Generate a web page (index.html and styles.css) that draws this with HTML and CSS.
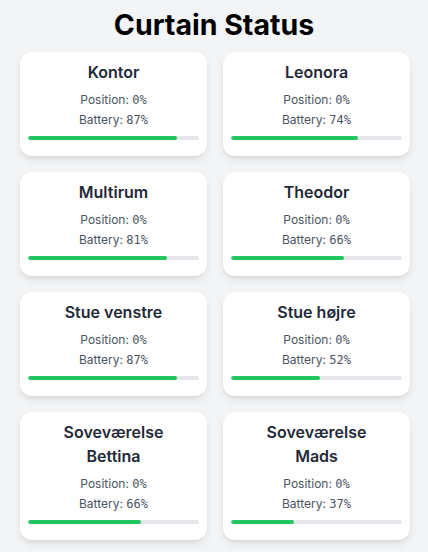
FILE: index.html
```html
<!DOCTYPE html>
<html lang="en">
<head>
<meta charset="utf-8">
<title>Curtain Status</title>
<link rel="stylesheet" href="styles.css">
</head>
<body>
<h1 class="title">Curtain Status</h1>
<div class="grid">
  <div class="card">
    <h2 class="name">Kontor</h2>
    <p class="line">Position: <span class="mono">0%</span></p>
    <p class="line">Battery: <span class="mono">87%</span></p>
    <div class="track"><div class="fill" style="width:87%"></div></div>
  </div>
  <div class="card">
    <h2 class="name">Leonora</h2>
    <p class="line">Position: <span class="mono">0%</span></p>
    <p class="line">Battery: <span class="mono">74%</span></p>
    <div class="track"><div class="fill" style="width:74%"></div></div>
  </div>
  <div class="card">
    <h2 class="name">Multirum</h2>
    <p class="line">Position: <span class="mono">0%</span></p>
    <p class="line">Battery: <span class="mono">81%</span></p>
    <div class="track"><div class="fill" style="width:81%"></div></div>
  </div>
  <div class="card">
    <h2 class="name">Theodor</h2>
    <p class="line">Position: <span class="mono">0%</span></p>
    <p class="line">Battery: <span class="mono">66%</span></p>
    <div class="track"><div class="fill" style="width:66%"></div></div>
  </div>
  <div class="card">
    <h2 class="name">Stue venstre</h2>
    <p class="line">Position: <span class="mono">0%</span></p>
    <p class="line">Battery: <span class="mono">87%</span></p>
    <div class="track"><div class="fill" style="width:87%"></div></div>
  </div>
  <div class="card">
    <h2 class="name">Stue højre</h2>
    <p class="line">Position: <span class="mono">0%</span></p>
    <p class="line">Battery: <span class="mono">52%</span></p>
    <div class="track"><div class="fill" style="width:52%"></div></div>
  </div>
  <div class="card">
    <h2 class="name">Soveværelse Bettina</h2>
    <p class="line">Position: <span class="mono">0%</span></p>
    <p class="line">Battery: <span class="mono">66%</span></p>
    <div class="track"><div class="fill" style="width:66%"></div></div>
  </div>
  <div class="card">
    <h2 class="name">Soveværelse Mads</h2>
    <p class="line">Position: <span class="mono">0%</span></p>
    <p class="line">Battery: <span class="mono">37%</span></p>
    <div class="track"><div class="fill" style="width:37%"></div></div>
  </div>
</div>
</body>
</html>
```
FILE: styles.css
```css
* { box-sizing: border-box; }
html, body { margin: 0; padding: 0; }
body {
  background: #f3f4f6;
  font-family: Inter, "Noto Sans", sans-serif;
  color: #111827;
  padding: 7px 18px 16px 20px;
}
.title {
  margin: 0 -18px 9px -20px;
  text-align: center;
  font-size: 28.5px;
  line-height: 36px;
  font-weight: 700;
  color: #000;
}
.grid {
  display: grid;
  grid-template-columns: 1fr 1fr;
  gap: 16px;
}
.card {
  background: #fff;
  border-radius: 12px;
  box-shadow: 0 4px 8px -1px rgba(0,0,0,0.1), 0 2px 4px -2px rgba(0,0,0,0.08);
  padding: 8px 8px 16px 8px;
  text-align: center;
}
.name {
  margin: 0 0 6px 0;
  padding: 0 16px;
  font-size: 16px;
  line-height: 24px;
  font-weight: 600;
  color: #1f2937;
}
.line {
  margin: 0;
  font-size: 12px;
  line-height: 20px;
  color: #4b5563;
}
.mono {
  font-family: "DejaVu Sans Mono", monospace;
  font-size: 12px;
  line-height: 1;
}
.track {
  margin-top: 6px;
  height: 4px;
  background: #e5e7eb;
  border-radius: 9999px;
  overflow: hidden;
}
.fill {
  height: 100%;
  background: #22c55e;
  border-radius: 9999px;
}
```
